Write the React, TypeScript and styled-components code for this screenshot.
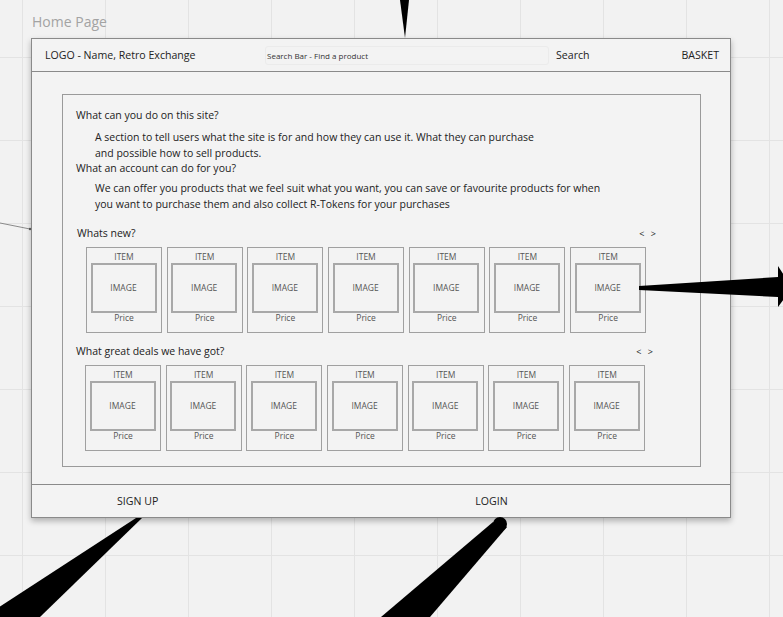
import React from 'react';
import styled, { createGlobalStyle } from 'styled-components';

const GlobalStyle = createGlobalStyle`
  html, body {
    margin: 0;
    padding: 0;
    background: #f2f2f2;
  }
  body {
    font-family: "Open Sans", "Noto Sans", sans-serif;
    color: #222;
  }
`;

const Canvas = styled.div`
  position: relative;
  width: 783px;
  height: 617px;
  overflow: hidden;
  background-color: #f2f2f2;
  background-image:
    linear-gradient(to right, #e3e3e3 1px, transparent 1px),
    linear-gradient(to bottom, #e3e3e3 1px, transparent 1px);
  background-size: 83px 83px;
  background-position: 22px 57px;
  padding: 13px 0 0 31px;
  box-sizing: border-box;
`;

const BoardTitle = styled.div`
  font-size: 14px;
  color: #a3a3a3;
  line-height: 18px;
  height: 25px;
  padding-left: 1px;
`;

const Frame = styled.div`
  width: 700px;
  height: 480px;
  box-sizing: border-box;
  border: 1px solid #8a8a8a;
  background: #f3f3f3;
  box-shadow: 0 3px 6px rgba(0, 0, 0, 0.28);
  display: flex;
  flex-direction: column;
`;

const Header = styled.div`
  height: 32px;
  border-bottom: 1px solid #8a8a8a;
  display: flex;
  align-items: center;
  padding: 0 11px 0 13px;
  font-size: 10.6px;
`;

const Logo = styled.span`
  width: 220px;
  white-space: nowrap;
`;

const SearchBox = styled.div`
  width: 281px;
  height: 17px;
  border: 1px solid #ebebeb;
  border-radius: 3px;
  display: flex;
  align-items: center;
  padding-left: 1px;
  font-size: 8px;
  color: #333;
`;

const SearchLabel = styled.span`
  margin-left: 7px;
`;

const Basket = styled.span`
  margin-left: auto;
`;

const Body = styled.div`
  flex: 1;
  padding: 22px 29px 17px 30px;
`;

const InnerBox = styled.div`
  height: 100%;
  box-sizing: border-box;
  border: 1px solid #9a9a9a;
  padding: 13px 0 0 13px;
  font-size: 10.5px;
  line-height: 15px;
`;

const Question = styled.div<{ $gap?: number }>`
  white-space: nowrap;
  margin-top: ${p => p.$gap ?? 0}px;
`;

const Paragraph = styled.div<{ $gap: number }>`
  white-space: nowrap;
  padding-left: 19px;
  margin-top: ${p => p.$gap}px;
  line-height: 15.5px;
`;

const SectionHead = styled.div<{ $gap: number; $shift: number }>`
  width: 582px;
  display: flex;
  justify-content: space-between;
  margin-top: ${p => p.$gap}px;
  padding-left: ${p => p.$shift}px;
  box-sizing: border-box;
`;

const Arrows = styled.span<{ $right: number }>`
  font-size: 9px;
  letter-spacing: 2px;
  margin-right: ${p => p.$right}px;
`;

const CardRow = styled.div<{ $shift: number }>`
  display: flex;
  gap: 4.7px;
  margin-top: 6px;
  padding-left: ${p => p.$shift}px;
`;

const Card = styled.div`
  width: 76px;
  height: 86px;
  box-sizing: border-box;
  border: 1px solid #a0a0a0;
  display: flex;
  flex-direction: column;
  align-items: center;
  padding-top: 3px;
  font-size: 8.5px;
  line-height: 12px;
  color: #555;
`;

const ImageBox = styled.div`
  width: 66px;
  height: 50px;
  box-sizing: border-box;
  border: 2px solid #a8a8a8;
  margin: 0 0 0 -1px;
  display: flex;
  align-items: center;
  justify-content: center;
`;

const Price = styled.div`
  margin-top: -1px;
`;

const Footer = styled.div`
  height: 32px;
  border-top: 1px solid #8a8a8a;
  display: flex;
  align-items: center;
  padding-left: 85px;
  gap: 317px;
  font-size: 10.6px;
`;

const Overlay = styled.svg`
  position: absolute;
  left: 0;
  top: 0;
  pointer-events: none;
`;

const items = Array.from({ length: 7 }, (_, i) => i);

const ItemCard = () => (
  <Card>
    <div>ITEM</div>
    <ImageBox>IMAGE</ImageBox>
    <Price>Price</Price>
  </Card>
);

const App: React.FC = () => {
  return (
    <Canvas>
      <GlobalStyle />
      <BoardTitle>Home Page</BoardTitle>
      <Frame>
        <Header>
          <Logo>LOGO - Name, Retro Exchange</Logo>
          <SearchBox>Search Bar - Find a product</SearchBox>
          <SearchLabel>Search</SearchLabel>
          <Basket>BASKET</Basket>
        </Header>
        <Body>
          <InnerBox>
            <Question>What can you do on this site?</Question>
            <Paragraph $gap={7}>
              A section to tell users what the site is for and how they can use it. What they can purchase
              <br />
              and possible how to sell products.
            </Paragraph>
            <Question>What an account can do for you?</Question>
            <Paragraph $gap={5}>
              We can offer you products that we feel suit what you want, you can save or favourite products for when
              <br />
              you want to purchase them and also collect R-Tokens for your purchases
            </Paragraph>
            <SectionHead $gap={14} $shift={1}>
              <span>Whats new?</span>
              <Arrows $right={0}>&lt; &gt;</Arrows>
            </SectionHead>
            <CardRow $shift={10}>
              {items.map(i => (
                <ItemCard key={i} />
              ))}
            </CardRow>
            <SectionHead $gap={11} $shift={0}>
              <span>What great deals we have got?</span>
              <Arrows $right={3}>&lt; &gt;</Arrows>
            </SectionHead>
            <CardRow $shift={9}>
              {items.map(i => (
                <ItemCard key={i} />
              ))}
            </CardRow>
          </InnerBox>
        </Body>
        <Footer>
          <span>SIGN UP</span>
          <span>LOGIN</span>
        </Footer>
      </Frame>
      <Overlay width="783" height="617" viewBox="0 0 783 617">
        <line x1="0" y1="223" x2="30" y2="229" stroke="#8a8a8a" strokeWidth="1" />
        <circle cx="30" cy="229" r="1.2" fill="#555" />
        <polygon points="400,0 409,0 405,38" fill="#000" />
        <polygon points="639,286 639,290 778,297 778,307 792,288 778,266 778,277" fill="#000" />
        <polygon points="136,518 142,518 40,617 -16,617" fill="#000" />
        <circle cx="500" cy="524" r="7" fill="#000" />
        <polygon points="493,522 507,527 430,617 381,617" fill="#000" />
      </Overlay>
    </Canvas>
  );
};

export default App;
